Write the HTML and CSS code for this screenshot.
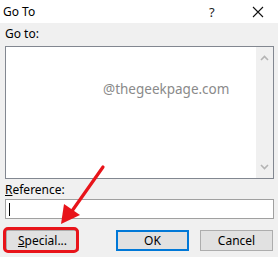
FILE: index.html
```html
<!DOCTYPE html>
<html lang="en">
<head>
    <meta charset="UTF-8">
    <title>Go To</title>
    <link rel="stylesheet" href="styles.css">
</head>
<body>
    <div class="dialog">
        <!-- Title bar -->
        <div class="titlebar">
            <span class="title">Go To</span>
            <span class="help">?</span>
            <span class="close">
                <svg width="12" height="12" viewBox="0 0 12 12"><path d="M1 1 L11 11 M11 1 L1 11" stroke="#111" stroke-width="1.1" fill="none"/></svg>
            </span>
        </div>

        <div class="content">
            <div class="label">Go to:</div>
            <div class="listbox">
                <div class="list-area">
                    <span class="watermark">@thegeekpage.com</span>
                </div>
                <div class="scrollbar">
                    <svg width="9" height="6" viewBox="0 0 9 6"><path d="M1 5 L4.5 1.5 L8 5" stroke="#b4b4b4" stroke-width="1.6" fill="none"/></svg>
                    <svg width="9" height="6" viewBox="0 0 9 6"><path d="M1 1 L4.5 4.5 L8 1" stroke="#b4b4b4" stroke-width="1.6" fill="none"/></svg>
                </div>
            </div>

            <div class="label ref-label"><u>R</u>eference:</div>
            <div class="textbox"><span class="caret"></span></div>

            <div class="button-row">
                <button class="btn special"><u>S</u>pecial...</button>
                <button class="btn default">OK</button>
                <button class="btn">Cancel</button>
            </div>
        </div>

        <!-- Red annotation -->
        <div class="highlight"></div>
        <svg class="arrow" width="278" height="257" viewBox="0 0 278 257">
            <path d="M103 167 L72 211" stroke="#e8141a" stroke-width="3.2" stroke-linecap="round" fill="none"/>
            <path d="M61 224 L64 204 L80 215 Z" fill="#e8141a"/>
        </svg>
    </div>
</body>
</html>
```

FILE: styles.css
```css
body {
    margin: 0;
    padding: 0;
    font-family: "Noto Sans", "Open Sans", sans-serif;
    font-size: 12px;
    color: #000;
}
.dialog {
    position: relative;
    width: 278px;
    height: 257px;
    overflow: hidden;
    background-color: #f0f0f0;
}
.titlebar {
    height: 23px;
    background-color: #fff;
    display: flex;
    align-items: center;
    padding-left: 3px;
}
.title {
    flex: 1;
    font-size: 12px;
}
.help {
    width: 43px;
    font-size: 13px;
    color: #222;
}
.close {
    width: 26px;
    display: flex;
    align-items: center;
}
.content {
    padding: 0 4px 0 5px;
}
.label {
    margin-top: 3px;
    line-height: 16px;
    height: 16px;
}
.listbox {
    margin-top: 4px;
    height: 131px;
    width: 267px;
    border: 1px solid #828790;
    display: flex;
}
.list-area {
    flex: 1;
    background-color: #fff;
    position: relative;
}
.watermark {
    position: absolute;
    left: 97px;
    top: 33px;
    font-size: 13.5px;
    color: #8a8a8a;
}
.scrollbar {
    width: 17px;
    background-color: #f0f0f0;
    display: flex;
    flex-direction: column;
    justify-content: space-between;
    align-items: center;
    padding: 8px 0 8px 0;
}
.ref-label {
    margin-top: 3px;
}
.textbox {
    margin-top: 1px;
    height: 18px;
    border: 1px solid #a0a0a0;
    background-color: #fff;
    display: flex;
    align-items: center;
    padding-left: 3px;
    width: 264px;
}
.caret {
    width: 1px;
    height: 13px;
    background-color: #000;
}
.button-row {
    margin-top: 11px;
    display: flex;
}
.btn {
    width: 73px;
    height: 21px;
    background-color: #e1e1e1;
    border: 1px solid #adadad;
    font-family: inherit;
    font-size: 12px;
    padding: 0;
    color: #000;
}
.special {
    margin-left: 1px;
}
.default {
    margin-left: 37px;
    margin-right: 11px;
    border: 2px solid #0078d7;
}
.highlight {
    position: absolute;
    left: 3px;
    top: 227px;
    width: 70px;
    height: 20px;
    border: 3px solid #e8141a;
    border-radius: 5px;
}
.arrow {
    position: absolute;
    left: 0;
    top: 0;
}
```
